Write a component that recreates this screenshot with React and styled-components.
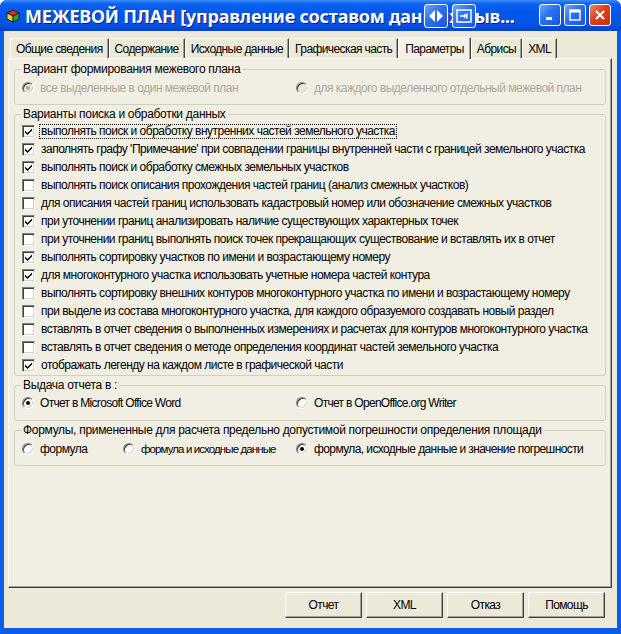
import React from "react";
import styled, { createGlobalStyle } from "styled-components";

const Global = createGlobalStyle`
  html, body { margin: 0; padding: 0; background: #fff; }
  body { font-family: "Liberation Sans", Arial, sans-serif; }
`;

const options = [
  { text: "выполнять поиск и обработку внутренних частей земельного участка", on: true, focus: true },
  { text: "заполнять графу 'Примечание' при совпадении границы внутренней части с границей земельного участка", on: true },
  { text: "выполнять поиск и обработку смежных земельных участков", on: true },
  { text: "выполнять поиск описания прохождения частей границ (анализ смежных участков)", on: false },
  { text: "для описания частей границ использовать кадастровый номер или обозначение смежных участков", on: false },
  { text: "при уточнении границ анализировать наличие существующих характерных точек", on: true },
  { text: "при уточнении границ выполнять поиск точек прекращающих существование  и вставлять их в отчет", on: false },
  { text: "выполнять сортировку участков по имени и возрастающему номеру", on: true },
  { text: "для многоконтурного участка использовать учетные номера частей контура", on: true },
  { text: "выполнять сортировку внешних контуров многоконтурного участка по имени и возрастающему номеру", on: false },
  { text: "при выделе из состава многоконтурного участка, для каждого образуемого создавать новый раздел", on: false },
  { text: "вставлять в отчет сведения о выполненных измерениях и расчетах для контуров многоконтурного участка", on: false },
  { text: "вставлять в отчет сведения о методе определения координат частей земельного участка", on: false },
  { text: "отображать легенду на каждом листе в графической части", on: true },
];

const tabs = ["Общие сведения", "Содержание", "Исходные данные", "Графическая часть", "Параметры", "Абрисы", "XML"];

const Window = styled.div`
  width: 621px;
  height: 634px;
  display: flex;
  flex-direction: column;
  background: #0a5de8;
  border-radius: 7px 7px 0 0;
  overflow: hidden;
`;

const TitleBar = styled.div`
  position: relative;
  height: 31px;
  flex: none;
  display: flex;
  align-items: center;
  padding-left: 5px;
  gap: 4px;
  background: linear-gradient(to bottom, #3b8cf6 0, #0a61f0 4px, #0155e7 14px, #0455e5 24px, #0243c8 31px);
`;

const Title = styled.div`
  font-family: "Noto Sans", "DejaVu Sans", sans-serif;
  font-weight: bold;
  font-size: 18px;
  color: #fff;
  white-space: nowrap;
  letter-spacing: -0.2px;
  text-shadow: 1px 1px 0 #0a1f80;
`;

const TitleButton = styled.div`
  position: absolute;
  top: 4px;
  left: ${(p) => p.x}px;
  width: ${(p) => p.w || 22}px;
  height: ${(p) => p.h || 22}px;
  border: 1px solid #fff;
  border-radius: 3px;
  box-sizing: border-box;
  background: ${(p) =>
    p.close
      ? "linear-gradient(135deg, #e88a6c 0, #d8431b 45%, #c53010 100%)"
      : "linear-gradient(135deg, #6ea7fb 0, #2a70f0 45%, #1a55dd 100%)"};
  display: flex;
  align-items: center;
  justify-content: center;
`;

const Client = styled.div`
  flex: 1;
  margin: 0 4px 6px 4px;
  background: #ece9d8;
  padding: 5px 5px 0 4px;
  display: flex;
  flex-direction: column;
`;

const TabsRow = styled.div`
  display: flex;
  align-items: flex-end;
  height: 22px;
  padding-left: 2px;
  position: relative;
  z-index: 1;
`;

const Tab = styled.div`
  height: ${(p) => (p.active ? 22 : 20)}px;
  box-sizing: border-box;
  padding: 0 ${(p) => (p.active ? 6 : 5)}px;
  margin-bottom: ${(p) => (p.active ? -1 : 0)}px;
  display: flex;
  align-items: center;
  font-size: 12px;
  letter-spacing: -0.6px;
  color: #000;
  white-space: nowrap;
  background: ${(p) => (p.active ? "#f3f2ea" : "#ece9d8")};
  border-top: 1px solid #fff;
  border-left: 1px solid #fff;
  border-right: 1px solid #404040;
  box-shadow: inset -1px 0 0 #a0a0a0;
`;

const Panel = styled.div`
  height: 530px;
  box-sizing: border-box;
  background: #f1efe4;
  border-top: 1px solid #fff;
  border-left: 1px solid #fff;
  border-right: 1px solid #404040;
  border-bottom: 1px solid #404040;
  box-shadow: inset -1px -1px 0 #a0a0a0;
  padding: 3px 5px 0 5px;
  display: flex;
  flex-direction: column;
  gap: 2px;
`;

const Group = styled.fieldset`
  margin: 0;
  border: 1px solid #d0d0bf;
  border-radius: 3px;
  padding: ${(p) => p.pad};
  min-width: 0;
`;

const Legend = styled.legend`
  font-size: 12px;
  letter-spacing: -0.3px;
  color: #000;
  padding: 0 2px;
  margin-left: 6px;
  line-height: 14px;
`;

const Row = styled.div`
  display: flex;
  align-items: center;
  height: 18px;
  padding-left: 7px;
`;

const Item = styled.div`
  display: flex;
  align-items: center;
  width: ${(p) => (p.w ? `${p.w}px` : "auto")};
  flex: none;
`;

const Label = styled.span`
  font-size: ${(p) => p.size || 12}px;
  letter-spacing: ${(p) => (p.ls !== undefined ? p.ls : -0.5)}px;
  color: ${(p) => (p.disabled ? "#aca899" : "#000")};
  margin-left: 5px;
  white-space: nowrap;
  line-height: 13px;
  padding: 0 1px;
  outline: ${(p) => (p.focus ? "1px dotted #000" : "none")};
`;

const Box = styled.span`
  width: 13px;
  height: 13px;
  box-sizing: border-box;
  flex: none;
  background: #fff;
  border-top: 1px solid #808080;
  border-left: 1px solid #808080;
  border-right: 1px solid #fff;
  border-bottom: 1px solid #fff;
  box-shadow: inset 1px 1px 0 #404040, inset -1px -1px 0 #d4d0c8;
  display: flex;
  align-items: center;
  justify-content: center;
`;

const Radio = styled.span`
  width: 12px;
  height: 12px;
  flex: none;
  border-radius: 50%;
  box-sizing: border-box;
  background: ${(p) => (p.disabled ? "#ece9d8" : "#fff")};
  border: 1px solid;
  border-color: #808080 #fff #fff #808080;
  box-shadow: inset 1px 1px 0 #404040, inset -1px -1px 0 #d4d0c8;
  display: flex;
  align-items: center;
  justify-content: center;

  &::after {
    content: "";
    width: 4px;
    height: 4px;
    border-radius: 50%;
    background: ${(p) => (p.disabled ? "#aca899" : "#000")};
    display: ${(p) => (p.on ? "block" : "none")};
  }
`;

const Footer = styled.div`
  display: flex;
  justify-content: flex-end;
  gap: 4px;
  padding: 4px 7px 0 0;
`;

const Button = styled.button`
  width: 77px;
  height: 26px;
  background: #ece9d8;
  border: 1px solid;
  border-color: #fff #404040 #404040 #fff;
  box-shadow: inset -1px -1px 0 #a0a0a0;
  font-family: "Liberation Sans", Arial, sans-serif;
  font-size: 12px;
  letter-spacing: -0.6px;
  color: #000;
  padding: 0;
`;

const Check = () => (
  <svg width="9" height="9" viewBox="0 0 9 9">
    <path d="M1 3.5 L3.5 6 L8 1.5 L8 3.5 L3.5 8 L1 5.5 Z" fill="#000" />
  </svg>
);

const CheckRow = ({ text, on, focus }) => (
  <Row>
    <Box>{on && <Check />}</Box>
    <Label focus={focus}>{text}</Label>
  </Row>
);

const RadioItem = ({ w, on, disabled, children, ls, size }) => (
  <Item w={w}>
    <Radio on={on} disabled={disabled} />
    <Label disabled={disabled} ls={ls} size={size}>
      {children}
    </Label>
  </Item>
);

const AppIcon = () => (
  <svg width="16" height="16" viewBox="0 0 16 16">
    <path d="M2 5 L8 2 L14 5 L8 8 Z" fill="#e03020" stroke="#111" strokeWidth="0.8" />
    <path d="M2 5 L8 8 L8 14 L2 11 Z" fill="#f0d020" stroke="#111" strokeWidth="0.8" />
    <path d="M8 8 L14 5 L14 11 L8 14 Z" fill="#30a030" stroke="#111" strokeWidth="0.8" />
  </svg>
);

export default function App() {
  return (
    <>
      <Global />
      <Window>
        <TitleBar>
          <AppIcon />
          <Title>МЕЖЕВОЙ ПЛАН [управление составом данных выв...</Title>
          <TitleButton x={424} w={24} h={24}>
            <svg width="16" height="14" viewBox="0 0 16 14">
              <path d="M7 1 L1 7 L7 13 Z" fill="#fff" />
              <path d="M9 1 L15 7 L9 13 Z" fill="#fff" />
            </svg>
          </TitleButton>
          <TitleButton x={452} w={24} h={24}>
            <svg width="16" height="14" viewBox="0 0 16 14">
              <rect x="1" y="1" width="14" height="12" fill="none" stroke="#fff" strokeWidth="1.5" />
              <path d="M4 7 H10 M8 5 L10 7 L8 9 M11 4 V10" stroke="#fff" strokeWidth="1.3" fill="none" />
            </svg>
          </TitleButton>
          <TitleButton x={539} w={22} h={22}>
            <svg width="12" height="12" viewBox="0 0 12 12">
              <rect x="2" y="8" width="6" height="3" fill="#fff" />
            </svg>
          </TitleButton>
          <TitleButton x={564} w={22} h={22}>
            <svg width="12" height="12" viewBox="0 0 12 12">
              <rect x="1" y="1" width="10" height="10" fill="none" stroke="#fff" strokeWidth="1.4" />
              <rect x="1" y="1" width="10" height="2.5" fill="#fff" />
            </svg>
          </TitleButton>
          <TitleButton x={589} w={22} h={22} close>
            <svg width="12" height="12" viewBox="0 0 12 12">
              <path d="M2 2 L10 10 M10 2 L2 10" stroke="#fff" strokeWidth="2.2" />
            </svg>
          </TitleButton>
        </TitleBar>

        <Client>
          <TabsRow>
            {tabs.map((t) => (
              <Tab key={t} active={t === "Параметры"}>
                {t}
              </Tab>
            ))}
          </TabsRow>
          <Panel>
            <Group pad="3px 0 7px">
              <Legend>Вариант формирования межевого плана</Legend>
              <Row>
                <RadioItem w={274} on disabled>
                  все выделенные в один межевой план
                </RadioItem>
                <RadioItem disabled>для каждого выделенного отдельный межевой план</RadioItem>
              </Row>
            </Group>

            <Group pad="1px 0 1px">
              <Legend>Варианты поиска и обработки данных</Legend>
              {options.map((o) => (
                <CheckRow key={o.text} {...o} />
              ))}
            </Group>

            <Group pad="2px 0 8px">
              <Legend>Выдача отчета в :</Legend>
              <Row>
                <RadioItem w={274} on ls={-0.7}>
                  Отчет в Microsoft Office Word
                </RadioItem>
                <RadioItem ls={-0.7}>Отчет в OpenOffice.org Writer</RadioItem>
              </Row>
            </Group>

            <Group pad="3px 0 7px">
              <Legend>Формулы, примененные для расчета предельно допустимой погрешности определения площади</Legend>
              <Row>
                <RadioItem w={101}>формула</RadioItem>
                <RadioItem w={173} size={11.5} ls={-0.9}>
                  формула и исходные данные
                </RadioItem>
                <RadioItem on ls={-0.6}>
                  формула, исходные данные и значение погрешности
                </RadioItem>
              </Row>
            </Group>
          </Panel>
          <Footer>
            <Button>Отчет</Button>
            <Button>XML</Button>
            <Button>Отказ</Button>
            <Button>Помощь</Button>
          </Footer>
        </Client>
      </Window>
    </>
  );
}
